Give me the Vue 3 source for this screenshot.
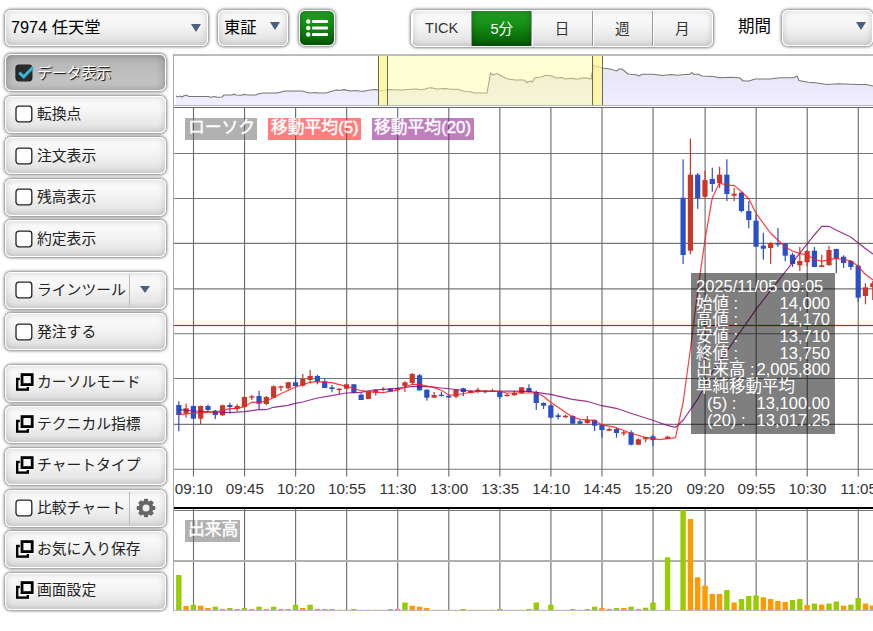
<template>
    <div class="page">
        <!-- Toolbar -->
        <div class="toolbar">
            <div class="btn select stock">
                <span>7974 任天堂</span>
                <i class="arrow"></i>
            </div>
            <div class="btn select market">
                <span>東証</span>
                <i class="arrow up"></i>
            </div>
            <button class="btn list_btn">
                <svg width="22" height="18" viewBox="0 0 22 18" fill="#fff">
                    <g v-for="y in [2.5, 9, 15.5]" :key="y">
                        <circle cx="2.3" :cy="y" r="2.2" />
                        <rect x="6" :y="y - 1.6" width="16" height="3.2" rx="1" />
                    </g>
                </svg>
            </button>
            <div class="btn intervals">
                <button
                    v-for="item in intervals"
                    :key="item"
                    :class="['interval', item === interval ? 'active' : '']"
                    @click="interval = item"
                >{{ item }}</button>
            </div>
            <span class="period_label">期間</span>
            <div class="btn select period">
                <span></span>
                <i class="arrow up"></i>
            </div>
        </div>

        <div class="content">
            <!-- Side menu -->
            <div class="sidebar">
                <div v-for="(group, g) in menu" :key="g" class="group">
                    <div
                        v-for="item in group"
                        :key="item.label"
                        :class="['btn', 'menu_btn', item.type, item.checked ? 'checked' : '']"
                        @click="toggle(item)"
                    >
                        <svg v-if="item.type === 'window'" class="icon" width="20" height="18" viewBox="0 0 20 18">
                            <rect x="2.2" y="6" width="10.6" height="10.6" fill="#fff" stroke="#000" stroke-width="2.4" />
                            <rect x="4.8" y="0" width="14.6" height="14" fill="#fff" />
                            <rect x="7" y="1.6" width="10.2" height="10" fill="#f8f8f8" stroke="#000" stroke-width="2.8" />
                        </svg>
                        <svg v-else class="icon" width="20" height="18" viewBox="0 0 20 18">
                            <rect x="1" y="1.2" width="15.8" height="15.6" rx="2.8" :fill="item.checked ? '#2b2b2b' : '#fff'" stroke="#222" stroke-width="1.3" />
                            <path v-if="item.checked" d="M4.3 8.6l4.4 4.2L18 3.2" fill="none" stroke="#32b8dc" stroke-width="3" />
                        </svg>
                        <span class="menu_label">{{ item.label }}</span>
                        <span v-if="item.extra" class="extra">
                            <i v-if="item.extra === 'arrow'" class="arrow"></i>
                            <svg v-else width="20" height="20" viewBox="-10 -10 20 20">
                                <rect v-for="a in 4" :key="a" x="-2.1" y="-9.3" width="4.2" height="18.6" rx="1" fill="#666" :transform="`rotate(${a * 45})`" />
                                <circle r="5.4" fill="none" stroke="#666" stroke-width="4" />
                                <circle r="3.5" fill="#f0f0f0" />
                            </svg>
                        </span>
                    </div>
                </div>
            </div>

            <!-- Chart -->
            <div class="chart">
                <svg width="700" height="557" viewBox="173 54 700 557">
                    <defs>
                        <linearGradient id="area" x1="0" y1="0" x2="0" y2="1">
                            <stop offset="0" stop-color="#e9e9ec" />
                            <stop offset="0.35" stop-color="#e9e7f7" />
                            <stop offset="1" stop-color="#f0efff" />
                        </linearGradient>
                    </defs>

                    <!-- overview -->
                    <polygon :points="`176,105 ${overview} 873,105`" fill="url(#area)" />
                    <polyline :points="overview" fill="none" stroke="#777" stroke-width="1.1" />
                    <rect x="379" y="56" width="223" height="49" fill="#ffff96" fill-opacity="0.4" />
                    <rect x="379" y="56" width="8" height="49" fill="#fff68a" fill-opacity="0.6" />
                    <rect x="593" y="56" width="8" height="49" fill="#fff68a" fill-opacity="0.6" />
                    <path d="M378.5 56v49M387.5 56v49M592.5 56v49M602.5 56v49" stroke="#666" />
                    <path d="M173 55h700" stroke="#bbb" stroke-width="2" />
                    <path d="M173 105.5h700" stroke="#b5b5b5" />
                    <path d="M173 107.5h700" stroke="#666" />
                    <path d="M173.5 54v557" stroke="#aaa" />

                    <!-- grid -->
                    <path v-for="y in gridY" :key="y" :d="`M174 ${y}h699`" stroke="#777" stroke-width="1.1" />
                    <path v-for="t in ticks" :key="t.x" :d="`M${t.x} 108V476.5M${t.x} 509V610`" stroke="#6a6a6a" stroke-width="1.1" />
                    <path d="M174 510.5h699" stroke="#777" />
                    <path d="M174 561h699" stroke="#b0b0b0" stroke-width="2" />

                    <!-- candles -->
                    <g v-for="(c, i) in candles" :key="i" :fill="c.up ? '#cc3629' : '#2a4fc6'">
                        <rect :x="c.x - 0.6" :y="c.high" width="1.2" :height="c.low - c.high" />
                        <rect :x="c.x - 2.6" :y="c.top" width="5.2" :height="c.bottom - c.top" />
                    </g>
                    <polyline :points="ma20" fill="none" stroke="#800080" stroke-opacity="0.8" stroke-width="1.2" />
                    <polyline :points="ma5" fill="none" stroke="#ff1a1a" stroke-opacity="0.85" stroke-width="1.2" />

                    <!-- last price -->
                    <rect x="174" y="324.9" width="699" height="1.2" fill="#e81010" />

                    <!-- time axis -->
                    <text v-for="t in ticks" :key="t.label" :x="t.x + 0.3" y="494" class="tick">{{ t.label }}</text>
                    <path d="M174 508h699" stroke="#000" stroke-width="2" />

                    <!-- volume -->
                    <rect
                        v-for="(v, i) in volumes"
                        :key="i"
                        :x="v.x - 2.7"
                        :y="610 - v.height"
                        width="5.4"
                        :height="v.height"
                        :fill="v.up ? '#9c0' : '#f90'"
                    />
                    <path d="M173 610.5h700" stroke="#bbb" />
                </svg>

                <span class="badge candle_badge">ローソク</span>
                <span class="badge ma5_badge">移動平均(5)</span>
                <span class="badge ma20_badge">移動平均(20)</span>
                <span class="badge volume_badge">出来高</span>

                <div class="tooltip">
                    <div>2025/11/05 09:05</div>
                    <div v-for="row in quote" :key="row[0]" class="row">
                        <span :class="row[2]">{{ row[0] }}</span>
                        <span>{{ row[1] }}</span>
                    </div>
                </div>
            </div>
        </div>
    </div>
</template>
<script setup>
import { ref } from "vue";

const intervals = ["TICK", "5分", "日", "週", "月"];
const interval = ref("5分");

const menu = ref([
    [
        { label: "データ表示", type: "check", checked: true },
        { label: "転換点", type: "check" },
        { label: "注文表示", type: "check" },
        { label: "残高表示", type: "check" },
        { label: "約定表示", type: "check" },
    ],
    [
        { label: "ラインツール", type: "check", extra: "arrow" },
        { label: "発注する", type: "check" },
    ],
    [
        { label: "カーソルモード", type: "window" },
        { label: "テクニカル指標", type: "window" },
        { label: "チャートタイプ", type: "window" },
        { label: "比較チャート", type: "check", extra: "gear" },
        { label: "お気に入り保存", type: "window" },
        { label: "画面設定", type: "window" },
    ],
]);

function toggle(item) {
    if (item.type === "check") item.checked = !item.checked;
}

const quote = [
    ["始値 :", "14,000", ""],
    ["高値 :", "14,170", ""],
    ["安値 :", "13,710", ""],
    ["終値 :", "13,750", ""],
    ["出来高 :", "2,005,800", ""],
    ["単純移動平均", "", ""],
    ["(5) :", "13,100.00", "indent"],
    ["(20) :", "13,017.25", "indent"],
];

const gridY = [153.5, 198.5, 243.4, 288.9, 333.7, 378.5, 424.4, 469.3];

const labels = ["09:10", "09:45", "10:20", "10:55", "11:30", "13:00", "13:35", "14:10", "14:45", "15:20", "09:20", "09:55", "10:30", "11:05"];
const ticks = labels.map((label, i) => ({ label, x: i < 10 ? 193.5 + i * 51.06 : 705.1 + (i - 10) * 51.06 }));

/**
 * x position of a bar, the second day starts at bar 69
 *
 * @param {number} i - index of the bar
 */
function barX(i) {
    return i < 69 ? 178.8 + i * 7.295 : 683.1 + (i - 69) * 7.295;
}

// up/down, high, body top, body bottom, low
const prices = [
    [0, 401.3, 405, 415, 431.3], [1, 403.5, 408.3, 413.7, 417.7], [0, 405.5, 406, 418.7, 419], [1, 405.5, 406, 418.7, 424],
    [0, 404.5, 406, 410, 412], [0, 410, 410.7, 415, 419], [1, 404.5, 405.3, 415.3, 416], [0, 402.7, 405, 407, 413.3],
    [1, 404, 406, 408.7, 411.3], [1, 396, 397, 407, 407.7], [1, 395, 396.3, 397.7, 400], [0, 390.7, 396, 403.7, 409.3],
    [1, 396, 397, 404, 405.3], [1, 385.3, 386.3, 397.7, 397.7], [1, 385.7, 386.3, 387.7, 391], [1, 382, 382.3, 388.3, 389.7],
    [0, 376.3, 382.3, 386, 386.7], [1, 374, 379, 385.7, 386.7], [1, 370, 376, 380, 383.7], [0, 374.7, 376, 381.7, 384.3],
    [0, 378.7, 381.3, 388, 388], [0, 385, 387.3, 389, 392.3], [1, 388.3, 388.7, 390, 394], [1, 384, 384.3, 388.7, 390],
    [0, 384, 384.3, 392.7, 393.3], [0, 393.3, 394.7, 400, 400], [1, 390.7, 391.3, 399, 399], [1, 389, 390, 392.7, 395.7],
    [1, 387, 389, 390, 391.3], [0, 388, 388.7, 391.7, 392], [1, 387, 388, 389.7, 391.7], [1, 381.3, 382.3, 386, 392],
    [1, 373, 374, 383, 384.3], [0, 374, 375.3, 390.3, 390.7], [0, 389.3, 389.7, 397.7, 400.7], [1, 392, 395, 397.7, 397.7],
    [0, 392, 394.7, 396, 396.7], [0, 394.7, 395.7, 397.5, 398], [1, 389.3, 389.7, 396.7, 398.3], [0, 387.7, 388.3, 392, 396],
    [1, 390, 391, 393, 393.3], [1, 387.7, 389.7, 392, 393.3], [1, 390, 390.7, 392.3, 393.3], [1, 388.7, 390.7, 392, 392],
    [0, 390.7, 391.3, 397, 399], [1, 393.3, 394.7, 396, 396.7], [1, 390.7, 393, 395.3, 395.7], [1, 387, 387.3, 393.3, 394],
    [0, 384.3, 388, 392, 392.7], [0, 390.7, 392, 403, 410], [0, 402.3, 403, 405.7, 409], [0, 404.3, 405.3, 417.7, 418.3],
    [0, 413.3, 415.3, 417, 419.3], [1, 414.7, 415.7, 417.3, 418], [0, 415.3, 416, 423.7, 424], [0, 420, 421.3, 423.7, 424],
    [1, 416, 420, 423, 423.7], [0, 419.3, 420, 425.7, 431], [0, 424, 425, 430, 437.7], [1, 427.7, 429, 430.7, 431],
    [0, 428, 429, 433, 437.7], [1, 431, 432.3, 433.7, 435.7], [0, 430.3, 432.3, 444.7, 445.3], [1, 438.3, 439.3, 444.7, 445],
    [1, 437, 437.3, 439.3, 442.3], [0, 435, 436.3, 440, 446.3], null, [1, 435.7, 436.7, 438.7, 439],
    null,
    [0, 159.3, 197.7, 255, 264], [1, 138.7, 174.7, 250.7, 254.3], [0, 173, 174.7, 198, 208.7], [1, 170.7, 180, 196.7, 197.7],
    [0, 167.7, 179, 184, 191.7], [1, 166.7, 174.7, 183, 188], [0, 159.3, 174.7, 194, 201], [1, 188, 193.7, 195.7, 201],
    [0, 192, 192.7, 211, 212.3], [0, 201.3, 211, 220, 228.3], [0, 214.3, 220.7, 246.7, 247], [0, 232.7, 245.7, 248.7, 259.7],
    [1, 242, 243, 248, 264], [0, 228, 243, 244.7, 247], [0, 243, 243.3, 255.7, 261.3], [0, 252.7, 254.7, 264, 267],
    [1, 247, 261, 265.3, 271], [1, 250, 251, 262.3, 266.3], [0, 247, 250.7, 267, 267], [1, 254.7, 265.3, 267, 267],
    [1, 246, 250, 265, 266], [0, 248.7, 249, 258.7, 273.3], [0, 255.3, 256.7, 263, 268], [0, 260.3, 261, 267, 270],
    [0, 264.7, 265.7, 297.7, 302], [1, 283.3, 287.3, 296, 304.3], [1, 281, 283.3, 287, 300],
];

const candles = prices
    .map((p, i) => p && { x: barX(i), up: p[0], high: p[1], top: p[2], bottom: p[3], low: p[4] })
    .filter(Boolean);

// positive is an up bar, negative is a down bar
const volumeData = [
    35, -4, 5.3, -4.3, -2, 3.3, -1, 2, -1, 2, -1, 3.3, -1, 3.3, -1, 1, 5.3, -2, 5.3, -1, -1, -1, -0.2, -0.2,
    1, -0.2, -0.2, -0.2, -0.2, 1, -1, 7.5, -4.3, -3.3, -2, -0.2, -0.2, -0.2, -0.2, 1, -0.2, -0.2, -0.2, -0.2,
    1, -0.2, -0.2, -0.2, 1, 7.5, -0.2, 5.3, -0.2, -0.2, 1, -0.2, 1, 3.3, -2, -1, 2, -2, 3.3, -1, 2.3, 7.5, 0, 52.7, 0,
    100, -91, -32.7, -24.3, -16, -16, 20, -7.5, 11, 14, 14.7, -12.7, -11, -9, -8, 10, 11, -5, 6.5, -5.5, 6.5, 8.5, -4.3, 5.3, 12, -6.5, -4.5,
];
const volumes = volumeData.map((v, i) => ({ x: barX(i), up: v > 0, height: Math.abs(v) }));

const ma5 = "178.7,414.7 186,414 200.7,412.7 215.3,412 230,408.7 237.3,408.7 244.3,406.7 251.7,402.3 259,402.3 266.3,401 273.3,397.7 280.7,393.7 295.3,387.3 302.7,384.7 310,382.3 317.3,381.7 331.7,382.7 346.3,386.3 361,390.7 368.3,391.7 383,392.7 397.7,390 405,386.7 412.3,384.3 419.3,384.3 434,387.7 441.3,390.3 448.7,395 455.7,395 466.7,393 477.7,391.3 499.7,391.3 506.7,393 536,393 543.3,396.3 550.7,402.3 565.3,412.3 572.3,416.7 580,419.3 594.3,420.3 601.7,424.7 616.3,427.7 630.7,433.3 645.3,437.3 660,439.7 675.5,437.7 683.2,402 690.3,350 697.8,290 705,240 712.2,198.3 719.4,182.7 726.7,185.3 734,185.3 741,191.3 748.7,198.7 756,213.3 770.7,233.3 785,246.7 792.3,251 799.7,253.3 807,255 814.3,259.3 821.7,261.3 836,258.3 850.7,260.7 857.7,266 865,274 873,280";
const ma20 = "178.7,409.7 193.3,411 230,412.7 244.3,411.7 259,409.7 266.3,409.7 273.3,407.3 288,405.3 295.3,403.3 302.7,402 317.3,398 331.7,395.7 346.3,393 361,392.3 373.3,390 397.7,388.3 412.3,386.3 430,386.7 441.3,388 470.3,391 528.7,391.3 550.7,394.3 572.3,399.3 587,401.3 601.7,405.7 616.3,408.3 630.7,413.3 652.7,420.3 667.3,425.3 675.7,427.3 683.2,420 697.8,399 712.3,372 756,309.3 799.7,253.3 814.3,235 821.7,226.3 829,226.3 836,230 850.7,237 865,248.3 873,254";

const overview = "176,96 178,97 180,96 182,97 184,95.7 186,95 189,96.5 208,96.5 211,97.3 214,96.5 217,97.3 222,97 224,95 232,95 234,94.2 236,95 242,95.2 244,94.3 247,95 256,95 258,94 263,93 277,93 285,91 302,91 309,93 316,92.5 318,93 326,93 336,90 341,90.3 344,89.6 350,91 356,90.5 362,91.5 370,90 376,89.5 382,91 388,89.5 400,90 416,89 421,89.8 425,89 428,88 432,87.7 436,89 446,88.5 450,89.3 458,89.3 463,91 469,91.7 475,93 487,93 490.5,73 493,75 497,73.3 503,77 508,79 515,80 524,80 527,82.5 530,81 532,82 535,77.7 541,77 546,75.3 552,76 556,78 562,77.5 565,79 572,78.3 577,79.3 582,78 586,77.7 591,79 593.5,65 595,66.3 603,68 610,69 617,71 619,69 622,69 628,74 636,74.7 639,76 642,74.2 653,74.3 663,75.5 671,74.5 678,75.3 684,74.5 689,74.5 692,72.7 694,74.5 698,74 702,76 714,76.5 719,77.7 732,77.3 740,78 743,81 749,81 755,79 770,79 780,77.8 794,77.8 797,76 799,80.5 808,82.3 817,83 827,84.5 838,83.7 857,84.5 866,84.5 873,86";
</script>
<style>
body {
    background: #fff;
    overflow: hidden;
}
</style>
<style scoped>
.page {
    width: 873px;
    height: 631px;
    overflow: hidden;
    font-family: "Liberation Sans", "Noto Sans CJK JP", sans-serif;
    color: #000;
}

.btn {
    box-sizing: border-box;
    border: 1.5px solid #fff;
    border-radius: 6px;
    background: linear-gradient(#fdfdfd, #f4f4f4 45%, #dedede);
    box-shadow: 0 0 3px 1px rgba(0, 0, 0, 0.5), inset 0 0 7px rgba(0, 0, 0, 0.18);
}

.toolbar {
    height: 54px;
    box-sizing: border-box;
    padding: 10px 0 0 5px;
    display: flex;
    align-items: flex-start;
}

.select {
    height: 36px;
    display: flex;
    align-items: center;
    justify-content: space-between;
    font-size: 16.3px;
    line-height: 20px;
    padding: 0 6px 2px 5px;
    flex-shrink: 0;
}

.arrow {
    width: 0;
    height: 0;
    border: 5px solid transparent;
    border-top: 8px solid #4a6080;
    border-bottom: 0;
    position: relative;
    top: 1px;
}

.arrow.up {
    top: -1px;
}

.stock {
    width: 203px;
}

.market {
    width: 70px;
    margin-left: 10px;
}

.market .arrow {
    left: -1px;
}

.list_btn {
    width: 36px;
    height: 36px;
    margin-left: 11px;
    padding: 0;
    display: flex;
    align-items: center;
    justify-content: center;
    background: linear-gradient(#25a025, #149014 40%, #055a05);
    box-shadow: 0 0 3px 1px rgba(0, 0, 0, 0.5), inset 0 0 7px rgba(0, 0, 0, 0.25);
}

.intervals {
    width: 302px;
    height: 37px;
    margin-left: 76px;
    display: flex;
    overflow: hidden;
}

.interval {
    flex: 1;
    border: 0;
    border-right: 1px solid #999;
    padding: 0 0 2px;
    background: none;
    box-shadow: inset 1px 0 0 #fff;
    font: 14.6px "Liberation Sans", "Noto Sans CJK JP", sans-serif;
    color: #333;
}

.interval:last-child {
    border-right: 0;
}

.interval.active {
    color: #fff;
    background: linear-gradient(#25a025, #149014 40%, #055a05);
    box-shadow: inset 0 0 7px rgba(0, 0, 0, 0.3);
}

.period_label {
    width: 44px;
    margin-left: 25px;
    font-size: 16.5px;
    line-height: 33px;
}

.period {
    width: 91px;
}

.content {
    display: flex;
}

.sidebar {
    width: 173px;
    box-sizing: border-box;
    padding-left: 5px;
    flex-shrink: 0;
}

.group {
    display: flex;
    flex-direction: column;
    gap: 4.6px;
    margin-bottom: 14.4px;
}

.menu_btn {
    width: 161px;
    height: 37px;
    display: flex;
    align-items: center;
    padding-left: 9px;
}

.menu_btn.window {
    padding-bottom: 2px;
}

.menu_btn.checked {
    background: linear-gradient(#b4b4b4, #c8c8c8);
    box-shadow: 0 0 3px 1px rgba(0, 0, 0, 0.5), inset 0 0 8px rgba(0, 0, 0, 0.3);
}

.checked .menu_label {
    color: #fff;
    text-shadow: 1px 1px 1px #000;
}

.icon {
    width: 20px;
    flex-shrink: 0;
}

.menu_label {
    width: 92px;
    margin-left: 2px;
    font-size: 14.8px;
    line-height: 20px;
    color: #222;
    white-space: nowrap;
}

.extra {
    height: 32px;
    flex: 1;
    border-left: 1px solid #bbb;
    display: flex;
    align-items: center;
    justify-content: center;
    padding-right: 3px;
}

.extra .arrow {
    border-top-width: 7px;
    top: -1px;
    left: -1px;
}

.chart {
    position: relative;
    width: 700px;
    height: 557px;
}

.chart > svg {
    display: block;
}

.tick {
    font-size: 15.2px;
    text-anchor: middle;
    fill: #333;
}

.badge {
    position: absolute;
    top: 64px;
    height: 22px;
    box-sizing: border-box;
    padding: 0 3px;
    color: #fff;
    font-size: 16.8px;
    -webkit-text-stroke: 0.4px #fff;
    line-height: 20px;
    white-space: nowrap;
}

.candle_badge {
    left: 12px;
    width: 72px;
    background: rgba(100, 100, 100, 0.5);
}

.ma5_badge {
    left: 95px;
    width: 93px;
    background: rgba(255, 0, 0, 0.5);
}

.ma20_badge {
    left: 199px;
    width: 102px;
    padding: 0 2px;
    background: rgba(128, 0, 128, 0.5);
}

.volume_badge {
    left: 12px;
    top: 466px;
    width: 55px;
    background: rgba(100, 100, 100, 0.5);
}

.tooltip {
    position: absolute;
    left: 518px;
    top: 219px;
    width: 144px;
    height: 161px;
    box-sizing: border-box;
    padding: 5px 5px 0;
    background: rgba(0, 0, 0, 0.5);
    color: #fff;
    font-size: 16.5px;
    line-height: 16.7px;
    white-space: nowrap;
}

.row {
    display: flex;
    justify-content: space-between;
    height: 16.7px;
}

.indent {
    padding-left: 11px;
}
</style>
